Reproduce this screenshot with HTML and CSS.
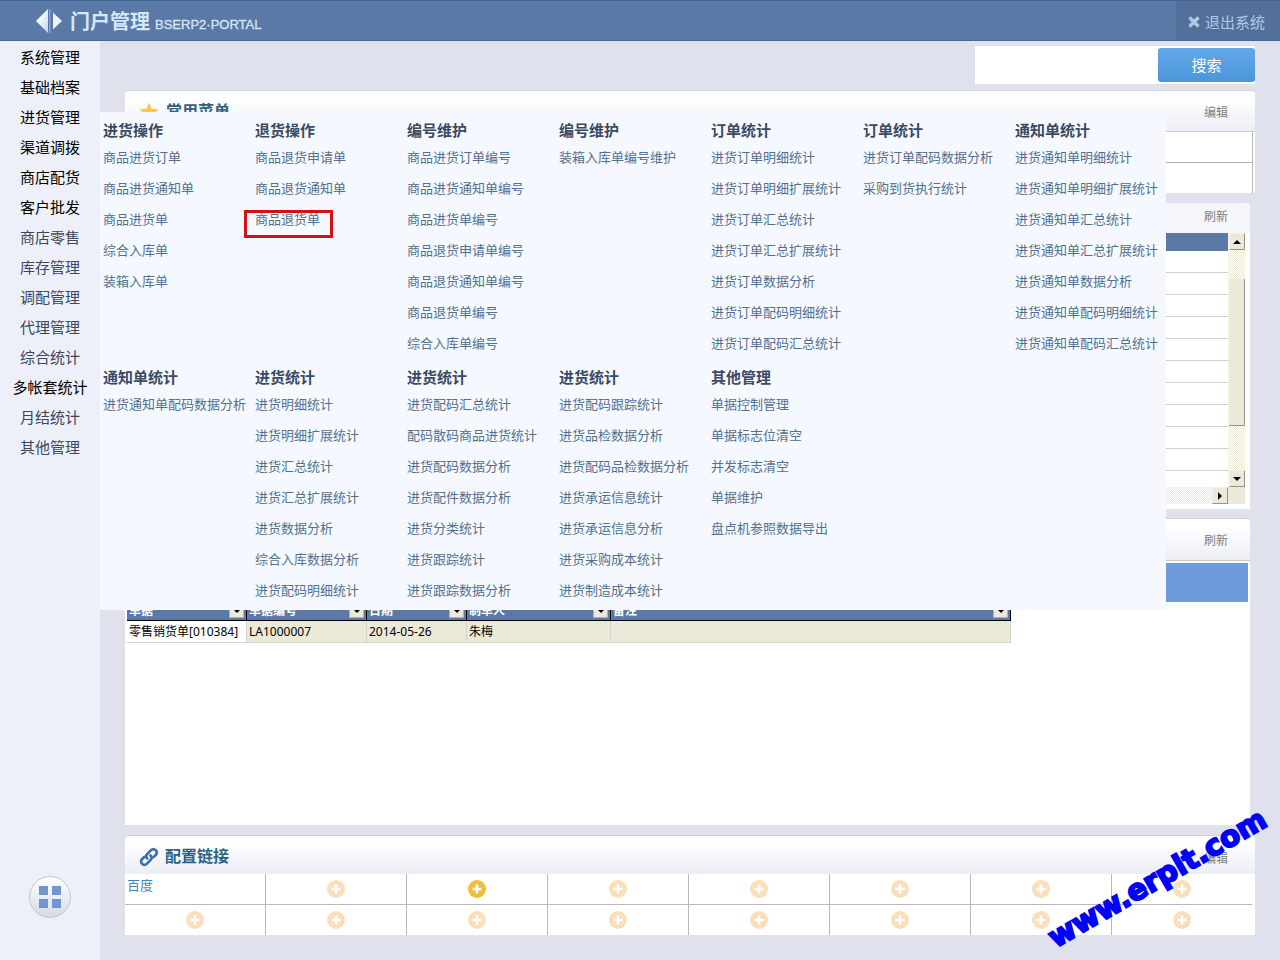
FILE: index.html
```html
<!DOCTYPE html>
<html lang="zh-CN">
<head>
<meta charset="utf-8">
<title>门户管理 BSERP2·PORTAL</title>
<link rel="stylesheet" href="styles.css">
</head>
<body>
<svg class="symbols" aria-hidden="true">
  <symbol id="plus" viewBox="0 0 18 18"><circle cx="9" cy="9" r="9" fill="currentColor"/><path d="M9 4.500v9M4.500 9h9" stroke="#fff" stroke-width="2.600"/></symbol>
</svg>
<header class="topbar">
  <div class="brand">
    <svg class="logo" viewBox="0 0 26 26" width="26" height="26" aria-hidden="true">
      <defs><linearGradient id="shine" x1="0" y1="0" x2="1" y2="1"><stop offset="0.300" stop-color="#fff"/><stop offset="1" stop-color="#b9d6f5"/></linearGradient></defs>
      <path d="M12 1v24L0 13z" fill="url(#shine)"/><path d="M13 1h1.500v24H13z" fill="#86a6d0"/><path d="M17 4.500v17l9-8.500z" fill="#eaf4ff"/>
    </svg>
    <h1 class="brand-name">门户管理</h1>
    <span class="brand-sub">BSERP2·PORTAL</span>
  </div>
  <button class="exit" type="button">
    <svg viewBox="0 0 12 12" width="12" height="12" aria-hidden="true"><path d="M1.500 1.500l9 9M10.500 1.500l-9 9" stroke="currentColor" stroke-width="3.400"/></svg>
    退出系统
  </button>
</header>
<div class="layout">
  <nav class="sidebar" aria-label="模块">
    <ul>
      <li><a href="#">系统管理</a></li>
      <li><a href="#">基础档案</a></li>
      <li><a href="#">进货管理</a></li>
      <li><a href="#">渠道调拨</a></li>
      <li><a href="#">商店配货</a></li>
      <li><a href="#">客户批发</a></li>
      <li><a class="dim" href="#">商店零售</a></li>
      <li><a class="dim" href="#">库存管理</a></li>
      <li><a class="dim" href="#">调配管理</a></li>
      <li><a class="dim" href="#">代理管理</a></li>
      <li><a class="dim" href="#">综合统计</a></li>
      <li><a href="#">多帐套统计</a></li>
      <li><a class="dim" href="#">月结统计</a></li>
      <li><a class="dim" href="#">其他管理</a></li>
    </ul>
    <button class="apps" type="button" aria-label="应用">
      <svg viewBox="0 0 22 22" width="22" height="22" aria-hidden="true"><path d="M0 0h9v9H0zM13 0h9v9h-9zM0 13h9v9H0zM13 13h9v9h-9z" fill="#7095cf"/></svg>
    </button>
  </nav>
  <main class="content">
    <form class="search">
      <input type="text" aria-label="搜索">
      <button type="button">搜索</button>
    </form>

    <section class="panel favorites">
      <div class="panel-head">
        <svg viewBox="0 0 20 20" width="20" height="20" aria-hidden="true"><path d="M10 0.500l2.600 6.300 6.900.6-5.200 4.500 1.600 6.700-5.900-3.600-5.900 3.600 1.600-6.700L.5 7.400l6.900-.6z" fill="#fdc64b"/></svg>
        <h2>常用菜单</h2>
        <a class="action" href="#">编辑</a>
      </div>
      <div class="fav-body"><div class="fav-row"></div><div class="fav-row"></div></div>
    </section>

    <section class="panel report">
      <div class="panel-head"><a class="action" href="#">刷新</a></div>
      <div class="frame">
        <div class="rows">
          <div class="rows-head"></div>
          <div class="line"></div><div class="line"></div><div class="line"></div><div class="line"></div><div class="line"></div>
          <div class="line"></div><div class="line"></div><div class="line"></div><div class="line"></div><div class="line"></div>
        </div>
        <div class="vbar">
          <button type="button" aria-label="向上"><svg viewBox="0 0 8 4" width="8" height="4"><path d="M4 0l4 4H0z"/></svg></button>
          <div class="thumb"></div>
          <button type="button" aria-label="向下"><svg viewBox="0 0 8 4" width="8" height="4"><path d="M0 0h8L4 4z"/></svg></button>
        </div>
        <div class="hbar">
          <button type="button" aria-label="向右"><svg viewBox="0 0 4 8" width="4" height="8"><path d="M0 0l4 4-4 4z"/></svg></button>
        </div>
        <div class="corner"></div>
      </div>
    </section>

    <section class="panel documents">
      <div class="panel-head"><a class="action" href="#">刷新</a></div>
      <div class="band"></div>
      <table>
        <colgroup><col class="c-type"><col class="c-no"><col class="c-date"><col class="c-user"><col class="c-note"></colgroup>
        <thead><tr>
          <th><div class="th">单据<button type="button" aria-label="筛选单据"><svg viewBox="0 0 8 4" width="8" height="4"><path d="M0 0h8L4 4z"/></svg></button></div></th>
          <th><div class="th">单据编号<button type="button" aria-label="筛选单据编号"><svg viewBox="0 0 8 4" width="8" height="4"><path d="M0 0h8L4 4z"/></svg></button></div></th>
          <th><div class="th">日期<button type="button" aria-label="筛选日期"><svg viewBox="0 0 8 4" width="8" height="4"><path d="M0 0h8L4 4z"/></svg></button></div></th>
          <th><div class="th">制单人<button type="button" aria-label="筛选制单人"><svg viewBox="0 0 8 4" width="8" height="4"><path d="M0 0h8L4 4z"/></svg></button></div></th>
          <th><div class="th">备注<button type="button" aria-label="筛选备注"><svg viewBox="0 0 8 4" width="8" height="4"><path d="M0 0h8L4 4z"/></svg></button></div></th>
        </tr></thead>
        <tbody><tr><td>零售销货单[010384]</td><td>LA1000007</td><td>2014-05-26</td><td>朱梅</td><td></td></tr></tbody>
      </table>
    </section>

    <section class="panel links">
      <div class="panel-head">
        <svg viewBox="0 0 20 20" width="20" height="20" aria-hidden="true" fill="none" stroke="#3f6eb0" stroke-width="2.600" stroke-linecap="round"><path d="M8.300 11.500c-1.500-1.500-1.200-3.300 0-4.500l3.500-3.600c1.500-1.500 3.500-1.500 4.900-.2 1.400 1.400 1.300 3.400 0 4.800l-2.200 2.200"/><path d="M11.500 8.500c1.500 1.500 1.300 3.300 0 4.600L8 16.600c-1.500 1.500-3.500 1.500-4.800.2-1.400-1.400-1.300-3.400 0-4.800l2.300-2.200"/></svg>
        <h2>配置链接</h2>
        <a class="action" href="#">编辑</a>
      </div>
      <div class="link-grid">
        <div class="cell first"><a href="#">百度</a></div>
        <button class="cell" type="button" aria-label="添加"><svg><use href="#plus"/></svg></button>
        <button class="cell active" type="button" aria-label="添加"><svg><use href="#plus"/></svg></button>
        <button class="cell" type="button" aria-label="添加"><svg><use href="#plus"/></svg></button>
        <button class="cell" type="button" aria-label="添加"><svg><use href="#plus"/></svg></button>
        <button class="cell" type="button" aria-label="添加"><svg><use href="#plus"/></svg></button>
        <button class="cell" type="button" aria-label="添加"><svg><use href="#plus"/></svg></button>
        <button class="cell" type="button" aria-label="添加"><svg><use href="#plus"/></svg></button>
        <button class="cell" type="button" aria-label="添加"><svg><use href="#plus"/></svg></button>
        <button class="cell" type="button" aria-label="添加"><svg><use href="#plus"/></svg></button>
        <button class="cell" type="button" aria-label="添加"><svg><use href="#plus"/></svg></button>
        <button class="cell" type="button" aria-label="添加"><svg><use href="#plus"/></svg></button>
        <button class="cell" type="button" aria-label="添加"><svg><use href="#plus"/></svg></button>
        <button class="cell" type="button" aria-label="添加"><svg><use href="#plus"/></svg></button>
        <button class="cell" type="button" aria-label="添加"><svg><use href="#plus"/></svg></button>
        <button class="cell" type="button" aria-label="添加"><svg><use href="#plus"/></svg></button>
      </div>
    </section>
  </main>

  <div class="megamenu">
    <div class="group"><h3>进货操作</h3><ul>
      <li><a href="#">商品进货订单</a></li><li><a href="#">商品进货通知单</a></li><li><a href="#">商品进货单</a></li><li><a href="#">综合入库单</a></li><li><a href="#">装箱入库单</a></li></ul></div>
    <div class="group"><h3>退货操作</h3><ul>
      <li><a href="#">商品退货申请单</a></li><li><a href="#">商品退货通知单</a></li><li class="marked"><a href="#">商品退货单</a></li></ul></div>
    <div class="group"><h3>编号维护</h3><ul>
      <li><a href="#">商品进货订单编号</a></li><li><a href="#">商品进货通知单编号</a></li><li><a href="#">商品进货单编号</a></li><li><a href="#">商品退货申请单编号</a></li><li><a href="#">商品退货通知单编号</a></li><li><a href="#">商品退货单编号</a></li><li><a href="#">综合入库单编号</a></li></ul></div>
    <div class="group"><h3>编号维护</h3><ul>
      <li><a href="#">装箱入库单编号维护</a></li></ul></div>
    <div class="group"><h3>订单统计</h3><ul>
      <li><a href="#">进货订单明细统计</a></li><li><a href="#">进货订单明细扩展统计</a></li><li><a href="#">进货订单汇总统计</a></li><li><a href="#">进货订单汇总扩展统计</a></li><li><a href="#">进货订单数据分析</a></li><li><a href="#">进货订单配码明细统计</a></li><li><a href="#">进货订单配码汇总统计</a></li></ul></div>
    <div class="group"><h3>订单统计</h3><ul>
      <li><a href="#">进货订单配码数据分析</a></li><li><a href="#">采购到货执行统计</a></li></ul></div>
    <div class="group"><h3>通知单统计</h3><ul>
      <li><a href="#">进货通知单明细统计</a></li><li><a href="#">进货通知单明细扩展统计</a></li><li><a href="#">进货通知单汇总统计</a></li><li><a href="#">进货通知单汇总扩展统计</a></li><li><a href="#">进货通知单数据分析</a></li><li><a href="#">进货通知单配码明细统计</a></li><li><a href="#">进货通知单配码汇总统计</a></li></ul></div>
    <div class="group"><h3>通知单统计</h3><ul>
      <li><a href="#">进货通知单配码数据分析</a></li></ul></div>
    <div class="group"><h3>进货统计</h3><ul>
      <li><a href="#">进货明细统计</a></li><li><a href="#">进货明细扩展统计</a></li><li><a href="#">进货汇总统计</a></li><li><a href="#">进货汇总扩展统计</a></li><li><a href="#">进货数据分析</a></li><li><a href="#">综合入库数据分析</a></li><li><a href="#">进货配码明细统计</a></li></ul></div>
    <div class="group"><h3>进货统计</h3><ul>
      <li><a href="#">进货配码汇总统计</a></li><li><a href="#">配码散码商品进货统计</a></li><li><a href="#">进货配码数据分析</a></li><li><a href="#">进货配件数据分析</a></li><li><a href="#">进货分类统计</a></li><li><a href="#">进货跟踪统计</a></li><li><a href="#">进货跟踪数据分析</a></li></ul></div>
    <div class="group"><h3>进货统计</h3><ul>
      <li><a href="#">进货配码跟踪统计</a></li><li><a href="#">进货品检数据分析</a></li><li><a href="#">进货配码品检数据分析</a></li><li><a href="#">进货承运信息统计</a></li><li><a href="#">进货承运信息分析</a></li><li><a href="#">进货采购成本统计</a></li><li><a href="#">进货制造成本统计</a></li></ul></div>
    <div class="group"><h3>其他管理</h3><ul>
      <li><a href="#">单据控制管理</a></li><li><a href="#">单据标志位清空</a></li><li><a href="#">并发标志清空</a></li><li><a href="#">单据维护</a></li><li><a href="#">盘点机参照数据导出</a></li></ul></div>
  </div>
  <div class="watermark">www.erplt.com</div>
</div>
</body>
</html>
```

FILE: styles.css
```css
*, *::after { box-sizing: border-box; }
body {
  margin: 0;
  min-height: 100vh;
  display: flex;
  flex-direction: column;
  background: #dfe1ed;
  font-family: "Liberation Sans", "Noto Sans CJK SC", sans-serif;
  font-size: 13px;
}
ul { list-style: none; margin: 0; padding: 0; }
a { color: inherit; text-decoration: none; }
h1, h2, h3 { margin: 0; }
button { border: 0; padding: 0; font-family: inherit; cursor: pointer; }
.symbols { display: none; }

.topbar {
  height: 41px;
  display: flex;
  justify-content: space-between;
  background: #5b79a6;
  border-top: 1px solid #416796;
  border-bottom: 1px solid #45669a;
}
.brand { display: flex; align-items: center; padding-left: 36px; color: #d6e6f8; }
.brand-name { font-size: 20px; line-height: 24px; font-weight: 700; margin: 2px 5px 0 8px; }
.brand-sub { font-size: 13px; line-height: 16px; margin-top: 8px; -webkit-text-stroke: 0.300px currentColor; }
.exit {
  width: 104px;
  display: flex;
  align-items: center;
  justify-content: center;
  gap: 5px;
  padding: 2px 3px 0 0;
  background: #54709a;
  color: #b3c8e6;
  font-size: 15px;
}

.layout { position: relative; flex: 1; display: flex; }
.sidebar {
  width: 100px;
  display: flex;
  flex-direction: column;
  justify-content: space-between;
  align-items: center;
  padding: 2px 0 42px;
  background: #edf0f9;
}
.sidebar li { line-height: 30px; font-size: 15px; text-align: center; color: #000; }
.sidebar .dim { color: #3c4660; }
.apps {
  width: 42px;
  height: 42px;
  display: grid;
  place-items: center;
  border: 1px solid #c3c5cf;
  border-radius: 50%;
  background: linear-gradient(#fff, #d8dae3);
}

.content { flex: 1; min-width: 0; padding: 5px 25px 25px; }
.search {
  display: flex;
  width: 280px;
  height: 38px;
  margin: 0 0 7px auto;
  padding: 2px 0;
  background: #fff;
}
.search input { flex: 1; min-width: 0; border: 0; background: transparent; outline: 0; }
.search button {
  width: 97px;
  padding-bottom: 2px;
  border-radius: 3px;
  background: linear-gradient(#61a8e6, #4c95da);
  color: #fff;
  font-size: 15px;
}

.panel { background: #fff; margin-bottom: 10px; border-radius: 4px 4px 0 0; }
.panel-head {
  display: flex;
  align-items: center;
  gap: 7px;
  height: 41px;
  padding: 0 27px 0 14px;
  border-radius: 4px 4px 0 0;
  box-shadow: 0 -1px 0 #d0d2de;
  background: linear-gradient(#fff 20%, #eceef6);
}
.panel-head h2 { font-size: 16px; line-height: 24px; color: #2e607f; }
.action { margin-left: auto; font-size: 12px; color: #808080; }

.favorites .panel-head { padding-top: 1px; border-bottom: 1px solid #c9cad4; }
.fav-body { margin-right: 2px; border-right: 1px solid #b3b3b3; }
.fav-row { height: 30px; }
.fav-row + .fav-row { height: 31px; border-top: 1px solid #b3b3b3; }

.report, .documents { margin-right: 5px; }
.report { padding-bottom: 5px; }
.report .panel-head, .documents .panel-head { padding-right: 22px; }
.report .panel-head { height: 30px; padding-bottom: 5px; background: #f5f6fa; box-shadow: none; }
.frame {
  display: grid;
  grid-template-columns: 1fr 17px;
  grid-template-rows: auto 17px;
  margin: 0 5px 0 2px;
}
.rows { padding-bottom: 16px; }
.rows-head { height: 18px; background: #5b79a6; }
.line { height: 22px; border-bottom: 1px solid #d0d0d0; }
.vbar, .hbar { background: repeating-conic-gradient(#ece9d8 0 25%, #fff 0 50%) 0 0 / 2px 2px; }
.vbar { display: flex; flex-direction: column; padding-left: 1px; }
.vbar button, .hbar button {
  height: 17px;
  width: 16px;
  display: grid;
  place-items: center;
  background: #ece9d8;
  border: 1px solid #f3f1e6;
  border-right-color: #96948a;
  border-bottom-color: #96948a;
}
.thumb {
  flex: 1;
  margin: 29px 0 44px;
  background: #ece9d8;
  border-right: 1px solid #96948a;
  border-bottom: 1px solid #96948a;
}
.hbar { display: flex; justify-content: flex-end; }
.corner { background: #ece9d8; }

.documents { min-height: 306px; margin-bottom: 11px; }
.documents .panel-head { height: 42px; border-bottom: 1px solid #c9cad4; }
.band { height: 39px; margin: 2px 2px 0; background: #6d9bdc; }
.documents table {
  width: 884px;
  margin-left: 2px;
  table-layout: fixed;
  border-collapse: separate;
  border-spacing: 0;
  font-family: "Noto Sans", "Noto Sans CJK SC", sans-serif;
  font-size: 12px;
}
.c-type, .c-no { width: 120px; }
.c-date { width: 100px; }
.c-user { width: 144px; }
.documents th {
  padding: 0;
  background: #5b79a6;
  color: #fff;
  border-right: 1px solid #000;
  border-bottom: 1px solid #000;
}
.th { display: flex; align-items: center; justify-content: space-between; height: 18px; padding: 0 2px; line-height: 18px; }
.th button { width: 15px; height: 14px; display: grid; place-items: center; background: #ece9d8; border: 1px solid #b5b29f; }
.documents td {
  height: 22px;
  padding: 0 2px;
  line-height: 18px;
  white-space: nowrap;
  background: #ece9d8;
  border-right: 1px solid #d3d3d0;
  border-bottom: 1px solid #d3d3d0;
}
.documents td:first-child { background: #fff; }

.links { margin-bottom: 0; }
.links .panel-head { height: 38px; padding-top: 4px; gap: 6px; }
.link-grid { display: grid; grid-template-columns: repeat(8, 1fr); padding-right: 2px; }
.cell {
  height: 30px;
  display: grid;
  place-items: center;
  background: #fff;
  border-right: 1px solid #b8b8bd;
  color: #fbdfbb;
}
.cell:nth-child(-n+8) { height: 31px; border-bottom: 1px solid #b8b8bd; }
.cell:nth-child(8n) { border-right-color: #fff; }
.cell svg { width: 18px; height: 18px; }
.cell.active { color: #f3bd3c; }
.cell.first { place-items: start; padding: 3px 2px; line-height: 18px; color: #4587b4; }

.megamenu {
  position: absolute;
  left: 100px;
  top: 71px;
  display: grid;
  grid-template-columns: repeat(7, 152px);
  row-gap: 7px;
  width: 1066px;
  padding: 7px 0 4px 3px;
  overflow: hidden;
  background: #f5f9ff;
}
.group h3 { font-size: 15px; line-height: 23px; color: #3b4a64; }
.group li { line-height: 31px; height: 31px; white-space: nowrap; color: #52708f; }
.marked { position: relative; }
.marked::after {
  content: "";
  position: absolute;
  left: -11px;
  top: 6px;
  width: 89px;
  height: 28px;
  border: 3px solid #d40f16;
}

.watermark {
  position: absolute;
  right: 0;
  bottom: 66px;
  transform: rotate(-30deg);
  font: bold 29px/32px "DejaVu Sans", sans-serif;
  color: #00f;
  -webkit-text-stroke: 2px #00f;
}
```
